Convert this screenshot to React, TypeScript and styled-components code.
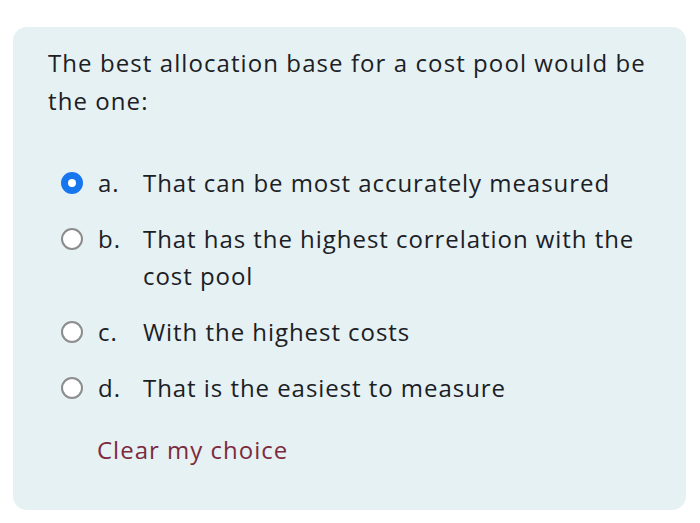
import React from 'react';
import styled, {createGlobalStyle} from 'styled-components';

const GlobalStyle = createGlobalStyle`
  body {
    margin: 0;
    background: #ffffff;
    font-family: "Open Sans", Lato, sans-serif;
  }
`;

const Page = styled.div`
  padding: 27px 14px 13px 13px;
`;

const Card = styled.div`
  background: #e6f1f4;
  border-radius: 14px;
  height: 483px;
  box-sizing: border-box;
  padding: 17px 30px 0 35px;
  color: #1b2024;
`;

const Question = styled.div`
  font-size: 24px;
  letter-spacing: 1.08px;
  line-height: 38px;
  max-width: 610px;
`;

const Options = styled.div`
  display: flex;
  flex-direction: column;
  gap: 19px;
  margin-top: 44px;
  padding-left: 13px;
`;

const Option = styled.div`
  display: flex;
  align-items: flex-start;
  font-size: 24px;
  letter-spacing: 0.95px;
  line-height: 37px;
`;

const Radio = styled.span<{$checked?: boolean}>`
  flex: none;
  width: 22px;
  height: 22px;
  margin-top: 8px;
  border-radius: 50%;
  box-sizing: border-box;
  background: #ffffff;
  border: ${p => p.$checked ? '7px solid #1676ee' : '2px solid #8c8c8c'};
`;

const Letter = styled.span`
  flex: none;
  width: 45px;
  margin-left: 15px;
`;

const Label = styled.span`
  flex: 1;
  max-width: 500px;
`;

const Clear = styled.div`
  margin-top: 7px;
  padding-left: 36px;
  font-size: 24px;
  letter-spacing: 1px;
  line-height: 36px;
  color: #7d2a3c;
`;

const options = [
  {letter: 'a.', text: 'That can be most accurately measured', checked: true},
  {letter: 'b.', text: 'That has the highest correlation with the cost pool'},
  {letter: 'c.', text: 'With the highest costs'},
  {letter: 'd.', text: 'That is the easiest to measure'},
];

export default function App() {
  return (
    <Page>
      <GlobalStyle/>
      <Card>
        <Question>The best allocation base for a cost pool would be the one:</Question>
        <Options>
          {options.map(o =>
            <Option key={o.letter}>
              <Radio $checked={o.checked}/>
              <Letter>{o.letter}</Letter>
              <Label>{o.text}</Label>
            </Option>)}
          <Clear>Clear my choice</Clear>
        </Options>
      </Card>
    </Page>
  );
}
